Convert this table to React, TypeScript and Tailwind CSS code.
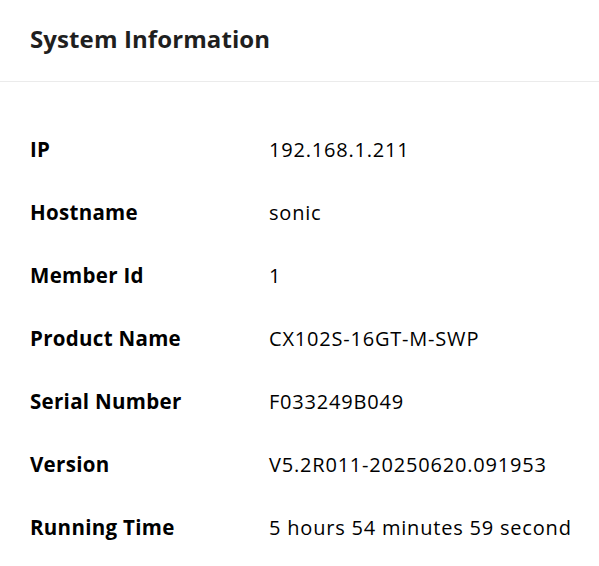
const rows: [string, string][] = [
  ["IP", "192.168.1.211"],
  ["Hostname", "sonic"],
  ["Member Id", "1"],
  ["Product Name", "CX102S-16GT-M-SWP"],
  ["Serial Number", "F033249B049"],
  ["Version", "V5.2R011-20250620.091953"],
  ["Running Time", "5 hours 54 minutes 59 second"],
]

export default function App() {
  return (
    <div className="w-[599px] h-[566px] overflow-hidden bg-white font-['Open_Sans',sans-serif] text-black">
      <div className="h-[82px] flex items-center px-[30px] pb-[3px] border-b border-[#ebebeb]">
        <h2 className="text-[24px] font-bold text-[#1f1f1f] tracking-[0.1px]">System Information</h2>
      </div>
      <div className="pt-[36px] px-[30px]">
        {rows.map(([label, value]) => (
          <div key={label} className="h-[63px] flex items-center">
            <div className="w-[239px] shrink-0 font-bold text-[20.5px] tracking-[0.3px]">{label}</div>
            <div className="whitespace-nowrap text-[20px] tracking-[0.8px]">{value}</div>
          </div>
        ))}
      </div>
    </div>
  )
}
